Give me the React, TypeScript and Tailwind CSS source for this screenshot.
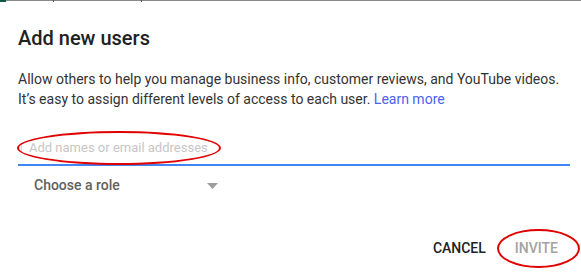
import React from "react";

export default function App() {
  return (
    <div
      className="relative w-[581px] h-[275px] bg-white overflow-hidden"
      style={{ fontFamily: "Roboto, 'Liberation Sans', sans-serif" }}
    >
      {/* top edge */}
      <div className="relative h-px bg-[#8a8a8a]">
        <div className="absolute left-0 top-0 h-[2px] w-[6px] bg-[#0b5a45]" />
        <div className="absolute left-[53px] top-0 h-[2px] w-px bg-[#555]" />
        <div className="absolute left-[141px] top-0 h-[2px] w-px bg-[#555]" />
      </div>

      <div className="pl-[18px] pr-[11px]">
        <h1 className="mt-[25px] text-[20px] leading-[24px] font-medium text-[#212121]">
          Add new users
        </h1>
        <p className="mt-[19px] text-[14px] leading-[20px] text-[#333333]">
          Allow others to help you manage business info, customer reviews, and YouTube videos.
          <br />
          It’s easy to assign different levels of access to each user.{" "}
          <span className="text-[#4a62f0]">Learn more</span>
        </p>

        <div className="mt-[29px] border-b-2 border-[#4285f4] pb-[6px] flex items-center">
          <div className="ml-[3px] w-px h-[8px] bg-[#d4d4d4]" />
          <span className="ml-[7px] text-[13px] leading-[20px] text-[#c6c6c6]">
            Add names or email addresses
          </span>
        </div>

        <div className="mt-[9px] flex items-center pl-[16px]">
          <span className="text-[14px] leading-[20px] font-medium text-[#616161] w-[173px]">
            Choose a role
          </span>
          <svg width="11" height="6" viewBox="0 0 11 6" className="mt-[2px]">
            <path d="M0 0 L11 0 L5.5 6 Z" fill="#9e9e9e" />
          </svg>
        </div>

        <div className="mt-[43px] flex justify-end items-center pr-[12px] gap-[29px]">
          <span className="text-[14px] leading-[20px] font-medium text-[#222222]">
            CANCEL
          </span>
          <span className="text-[14px] leading-[20px] font-medium text-[#a3a3a3]">
            INVITE
          </span>
        </div>
      </div>

      {/* red annotation ellipses */}
      <div className="absolute left-[17px] top-[131px] w-[204px] h-[34px] rounded-[50%] border-2 border-[#e00000]" />
      <div className="absolute left-[497px] top-[229px] w-[83px] h-[39px] rounded-[50%] border-2 border-[#e00000]" />
    </div>
  );
}
